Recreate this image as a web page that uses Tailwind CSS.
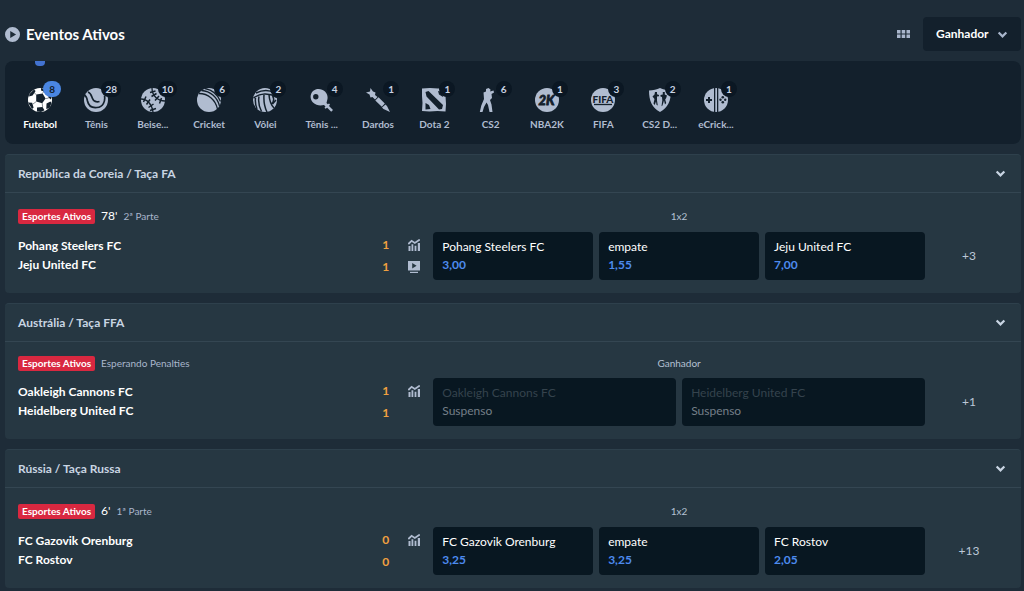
<!DOCTYPE html>
<html lang="pt">
<head>
    <meta charset="UTF-8">
    <meta name="viewport" content="width=device-width, initial-scale=1.0">
    <title>Eventos Ativos</title>
    <script src="https://cdn.jsdelivr.net/npm/@tailwindcss/browser@4"></script>
</head>
<body class="bg-[#1e2c38] font-['Lato','Open_Sans',sans-serif] text-white text-[12px] min-h-screen">

    <!-- shared icons -->
    <svg class="hidden">
        <symbol id="chevron" viewBox="0 0 10 10">
            <path d="M1.5 3.2 5 6.7l3.5-3.5" fill="none" stroke="currentColor" stroke-width="2"/>
        </symbol>
        <symbol id="stats" viewBox="0 0 12 12">
            <path d="M.3 5 3.6 1.800l3.200 2.200L11.800.6" fill="none" stroke="currentColor" stroke-width="1.800"/>
            <path d="M.5 7H2.500v5H.5zM3.500 5.200h1.800V12H3.500zM6.600 6.800h1.800V12H6.600zM9.800 4H12v8H9.800z" fill="currentColor"/>
        </symbol>
        <symbol id="tv" viewBox="0 0 12 12">
            <path d="M0 0h12v9.6H0zM4.2 2v5.4L8.6 4.7z" fill="currentColor" fill-rule="evenodd"/>
            <path d="M2 10.8h8V12H2z" fill="currentColor"/>
        </symbol>
    </svg>

    <div class="pl-[5px] pr-[3px]">
        <header class="flex items-center justify-between pt-[17px] pb-[10px]">
            <div class="flex items-center gap-1.5">
                <svg class="size-[15px]" viewBox="0 0 16 16"><path fill="#b0bcd0" fill-rule="evenodd" d="M8 0a8 8 0 1 0 0 16A8 8 0 0 0 8 0zM5.6 4.2v7.6L11.8 8z"/></svg>
                <h1 class="font-bold text-[15px]">Eventos Ativos</h1>
            </div>
            <div class="flex items-center gap-[13px]">
                <button aria-label="Grade">
                    <svg class="w-[13px] h-[8px]" viewBox="0 0 13 8" fill="#a9b6cc"><path d="M0 0h3.5v3.5H0zM4.7 0h3.5v3.5H4.7zM9.5 0H13v3.5H9.5zM0 4.5h3.5V8H0zM4.7 4.5h3.5V8H4.7zM9.5 4.5H13V8H9.5z"/></svg>
                </button>
                <div class="relative">
                    <select aria-label="Mercado" class="appearance-none bg-[#13202c] rounded h-[34px] w-[98px] pl-[13px] pr-6 font-bold text-[12px]">
                        <option>Ganhador</option>
                        <option>Total</option>
                    </select>
                    <svg class="absolute right-[13px] top-3 size-[11px] text-[#a9b6cc] pointer-events-none"><use href="#chevron"/></svg>
                </div>
            </div>
        </header>

        <!-- sports -->
        <nav class="bg-[#13202c] rounded-lg h-[83px] pl-[7px] mb-[10px]">
            <div class="flex max-w-[732px] h-full font-bold text-[10px] leading-3 text-[#b0bcd0] text-center">
                <a href="#" class="flex-1 relative flex flex-col items-center pt-[27px] gap-1.5 text-white">
                    <span class="absolute top-0 w-2.5 h-[5px] rounded-b bg-[#4272d0]"></span>
                    <span class="relative">
                        <svg class="size-6" viewBox="0 0 24 24"><circle cx="12" cy="12" r="12" fill="#fff"/><path fill="#13202c" d="m8.2 6.6 6.4-1.2 3 5.2-3.4 4.6-6-1.6zM1.5 6 6 1.5 7.6 3l-3 4.4-3.6 1zM0 14.500l4.200.2 1.400 5-1.600 1.300zM9 19.500l5.500-.5 2 3.200-3.500 1.800-4-.6zM18.500 15.500l4-2 1 1.500-2 5-3.200 1zM13 0l5.500 2-1 2-4.500-1.500zM20.500 5l3 4-.5 2.500-2.600-2z"/><path stroke="#13202c" stroke-width=".5" fill="none" d="M8.200 6.600 6 4.500M14.600 5.400 16 3M17.600 10.600l3-.5M14.200 15.200l.5 4M8.200 13.600 5 16"/></svg>
                        <span class="absolute left-[15px] -top-[7px] h-4 min-w-[18px] rounded-full bg-[#4a86e2] text-[#13202c] leading-4 px-1">8</span>
                    </span>
                    Futebol
                </a>
                <a href="#" class="flex-1 flex flex-col items-center pt-[27px] gap-1.5">
                    <span class="relative">
                        <svg class="size-6" viewBox="0 0 24 24"><circle cx="12" cy="12" r="12" fill="#b0bcd0"/><path stroke="#13202c" stroke-width="1.700" fill="none" d="M-.5 6.500C2.500 7.500 3 10 3.500 13c1 5 5 7 9.500 6.500 6-.5 8.500-6 7.500-12M4 4c3 1 3.500 4 4.500 6.500 1 3 4 4 7 3"/></svg>
                        <span class="absolute left-[17px] -top-[7px] h-4 min-w-4 rounded-full bg-[#0b1723] text-[#c9d3e2] leading-4 px-1">28</span>
                    </span>
                    Tênis
                </a>
                <a href="#" class="flex-1 flex flex-col items-center pt-[27px] gap-1.5">
                    <span class="relative">
                        <svg class="size-6" viewBox="0 0 24 24"><circle cx="12" cy="12" r="12" fill="#b0bcd0"/><path stroke="#13202c" stroke-width="1.300" fill="none" d="M0 11c6 0 11 5 12 13M11 0c0 8 6 13 13 13"/><path stroke="#13202c" stroke-width="1.500" fill="none" d="m2.500 14 2.500-5.500M5.500 16.500l3.500-5M7.500 19.500l5-3.500M9 22.500l6-2M9 4.500 14.500 3M10.500 8.500l5-3M14 12.500l4-4.500M18.500 15.500 20.500 10"/></svg>
                        <span class="absolute left-[17px] -top-[7px] h-4 min-w-4 rounded-full bg-[#0b1723] text-[#c9d3e2] leading-4 px-1">10</span>
                    </span>
                    Beise...
                </a>
                <a href="#" class="flex-1 flex flex-col items-center pt-[27px] gap-1.5">
                    <span class="relative">
                        <svg class="size-6" viewBox="0 0 24 24"><circle cx="12" cy="12" r="12" fill="#b0bcd0"/><path stroke="#13202c" stroke-width="1.300" fill="none" d="M2 5.500C11 5.500 18.500 11.500 20.500 21M4.500 2.500C13.500 3 20.500 9.500 22.500 18M8 .5C16 2 21 7 23.500 13.500"/></svg>
                        <span class="absolute left-[17px] -top-[7px] h-4 min-w-4 rounded-full bg-[#0b1723] text-[#c9d3e2] leading-4 px-1">6</span>
                    </span>
                    Cricket
                </a>
                <a href="#" class="flex-1 flex flex-col items-center pt-[27px] gap-1.5">
                    <span class="relative">
                        <svg class="size-6" viewBox="0 0 24 24"><circle cx="12" cy="12" r="12" fill="#b0bcd0"/><path stroke="#13202c" stroke-width="1.500" fill="none" d="M.5 10C7 5 16 4.500 24 9.500M3 5C9 2 16 1.500 22 5M11 7c-.5 7 .5 12 3 17M6 8.500c-1 5 0 10 2.500 15M2.500 10c-.5 4 0 7 1.500 11M16 7c.5 6 2 10 5 13M19.500 8c2 3 1 6-1 8M23 12l-3.500 4"/></svg>
                        <span class="absolute left-[17px] -top-[7px] h-4 min-w-4 rounded-full bg-[#0b1723] text-[#c9d3e2] leading-4 px-1">2</span>
                    </span>
                    Vôlei
                </a>
                <a href="#" class="flex-1 flex flex-col items-center pt-[27px] gap-1.5">
                    <span class="relative">
                        <svg class="size-6" viewBox="0 0 24 24"><path fill="#b0bcd0" fill-rule="evenodd" d="M3 3C6.500-.2 12 .5 15 3.500c2.500 2.500 3 5.500 2.300 8.300L16.500 15l1.300 1.300L19 15.500l1 1-1 1.500 4 4-1.800 1.800-4-4-1.700 1-1-1 1-1.300-1.500-1.500-3.500.5C8 17.500 5 16.500 3 14.500-.2 11.500-.2 6 3 3zM5.800 6a2.700 2.700 0 1 0 0 5.400 2.700 2.700 0 0 0 0-5.400z"/></svg>
                        <span class="absolute left-[17px] -top-[7px] h-4 min-w-4 rounded-full bg-[#0b1723] text-[#c9d3e2] leading-4 px-1">4</span>
                    </span>
                    Tênis ...
                </a>
                <a href="#" class="flex-1 flex flex-col items-center pt-[27px] gap-1.5">
                    <span class="relative">
                        <svg class="size-6" viewBox="0 0 24 24" fill="#b0bcd0"><path d="M4.500 0 7 3.500 9.500 4.500 9 7l2.500 2L9 11.500 6.500 9 4.500 9.500 3.500 6.500 0 4.500l4-1zM12.500 9.300l6.300 6.200-3 3.200-6.500-6.200zM19.500 16.500 21 18l3 6-6.500-3-1.500-1.500z"/></svg>
                        <span class="absolute left-[17px] -top-[7px] h-4 min-w-4 rounded-full bg-[#0b1723] text-[#c9d3e2] leading-4 px-1">1</span>
                    </span>
                    Dardos
                </a>
                <a href="#" class="flex-1 flex flex-col items-center pt-[27px] gap-1.5">
                    <span class="relative">
                        <svg class="size-6" viewBox="0 0 24 24"><path fill="#b0bcd0" d="M0 .5 8 0l8 .5 8-.5-.5 8 .5 8-.5 7.500-8-.5-8 .5-7.500-.5.5-8L0 8z"/><path fill="#13202c" d="m3.500 4 3-1L21 17l-1 4-3 .5L4.500 8.500zM3.500 15l3.500 2 1.500 4-5 .5zM16 3l4.500 1L21 9l-4-2.500z"/></svg>
                        <span class="absolute left-[17px] -top-[7px] h-4 min-w-4 rounded-full bg-[#0b1723] text-[#c9d3e2] leading-4 px-1">1</span>
                    </span>
                    Dota 2
                </a>
                <a href="#" class="flex-1 flex flex-col items-center pt-[27px] gap-1.5">
                    <span class="relative">
                        <svg class="size-6" viewBox="0 0 24 24" fill="#b0bcd0"><path d="M7 1 9.500 0l2 1.500-.3 2 3.300-1 .5 2-2.500 1.500.5 4-2 2 1.500 4.500 1 7.500h-3L9 17l-1.500-2.500L5 19l-1.500 5H.8l1.500-6.500L5 11l-.5-6.500L7 3.500z"/></svg>
                        <span class="absolute left-[17px] -top-[7px] h-4 min-w-4 rounded-full bg-[#0b1723] text-[#c9d3e2] leading-4 px-1">6</span>
                    </span>
                    CS2
                </a>
                <a href="#" class="flex-1 flex flex-col items-center pt-[27px] gap-1.5">
                    <span class="relative">
                        <svg class="size-6" viewBox="0 0 24 24"><circle cx="12" cy="12" r="12" fill="#b0bcd0"/><text x="11.500" y="16.500" text-anchor="middle" font-size="13" font-weight="900" font-style="italic" fill="#13202c" stroke="#13202c" stroke-width=".8">2K</text></svg>
                        <span class="absolute left-[17px] -top-[7px] h-4 min-w-4 rounded-full bg-[#0b1723] text-[#c9d3e2] leading-4 px-1">1</span>
                    </span>
                    NBA2K
                </a>
                <a href="#" class="flex-1 flex flex-col items-center pt-[27px] gap-1.5">
                    <span class="relative">
                        <svg class="size-6" viewBox="0 0 24 24"><circle cx="12" cy="12" r="12" fill="#b0bcd0"/><path stroke="#13202c" stroke-width="1.300" d="M3 16.500h18"/><text x="12" y="14.500" text-anchor="middle" font-size="10" font-weight="900" fill="#13202c">FIFA</text></svg>
                        <span class="absolute left-[17px] -top-[7px] h-4 min-w-4 rounded-full bg-[#0b1723] text-[#c9d3e2] leading-4 px-1">3</span>
                    </span>
                    FIFA
                </a>
                <a href="#" class="flex-1 flex flex-col items-center pt-[27px] gap-1.5">
                    <span class="relative">
                        <svg class="size-6" viewBox="0 0 24 24"><path fill="#b0bcd0" d="M1 2.500C5 2.500 9 1.500 12 0c3 1.500 7 2.500 11 2.500 0 10-3 17.500-11 21.500C4 20 1 12.500 1 2.500z"/><path fill="#13202c" d="M7 4h2v2.200l2 .8v1.200l-2 .3v4l.8 5-1.300-.8L8 13.500 6.700 17l-1.200-1.500L6.500 11l-2-2.500L6.500 6.500zM14.800 4h2v2.500l2.200 1-.8 2.500-1 1.500 1 3.500-1.200 1.500-1-4-1.500 5-1 .8.8-6L14 9l-1.500-.5V7l2.300-.5z"/></svg>
                        <span class="absolute left-[17px] -top-[7px] h-4 min-w-4 rounded-full bg-[#0b1723] text-[#c9d3e2] leading-4 px-1">2</span>
                    </span>
                    CS2 D...
                </a>
                <a href="#" class="flex-1 flex flex-col items-center pt-[27px] gap-1.5">
                    <span class="relative">
                        <svg class="size-6" viewBox="0 0 24 24"><circle cx="12" cy="12" r="12" fill="#b0bcd0"/><path fill="#13202c" d="M10 0h1.300v24H10zM13 0h1.300v24H13zM4 9h2v2h2v2H6v2H4v-2H2v-2h2z"/><g fill="#13202c"><circle cx="18.800" cy="9.200" r="1.300"/><circle cx="18.800" cy="14.200" r="1.300"/><circle cx="16.500" cy="11.700" r="1.200"/><circle cx="21.200" cy="11.700" r="1.200"/></g></svg>
                        <span class="absolute left-[17px] -top-[7px] h-4 min-w-4 rounded-full bg-[#0b1723] text-[#c9d3e2] leading-4 px-1">1</span>
                    </span>
                    eCrick...
                </a>
            </div>
        </nav>

        <main class="flex flex-col gap-[10px]">
            <section class="bg-[#263742] rounded border-t border-[#2e404c]">
                <button class="flex w-full items-center justify-between h-[38px] pl-[13px] pr-[15px] border-b border-[#344652] text-[#c9d5e3]">
                    <span class="font-bold">República da Coreia / Taça FA</span>
                    <svg class="size-[11px]"><use href="#chevron"/></svg>
                </button>
                <div class="grid grid-cols-[38fr_45fr_88px] pl-[13px] pr-2 py-[13px] gap-y-1.5">
                    <div class="flex items-center gap-1.5 h-5 text-[10px] text-[#a9b6cc]">
                        <span class="bg-[#d92840] text-white font-bold rounded-xs px-1 leading-[15px]">Esportes Ativos</span>
                        <span class="text-white text-[12px]">78'</span>
                        <span>2ª Parte</span>
                    </div>
                    <div class="text-center text-[10px] leading-5 text-[#b4c0d2]">1x2</div>
                    <div></div>
                    <div class="flex pr-[13px] font-bold">
                        <div class="flex-1 pt-1 leading-[19px]">
                            <p>Pohang Steelers FC</p>
                            <p>Jeju United FC</p>
                        </div>
                        <div class="w-8 pt-0.5 leading-[22px] text-[#f0a040] pl-1.5">
                            <p>1</p>
                            <p>1</p>
                        </div>
                        <div class="flex flex-col gap-[10px] pt-[7px] text-[#b0bcd0]">
                            <svg class="size-3"><use href="#stats"/></svg>
                            <svg class="size-3"><use href="#tv"/></svg>
                        </div>
                    </div>
                    <div class="flex gap-1.5">
                        <button class="flex-1 bg-[#081721] rounded h-12 px-[9px] text-left leading-[18px]">
                            <span class="block">Pohang Steelers FC</span>
                            <span class="block font-bold text-[#4d8bee]">3,00</span>
                        </button>
                        <button class="flex-1 bg-[#081721] rounded h-12 px-[9px] text-left leading-[18px]">
                            <span class="block">empate</span>
                            <span class="block font-bold text-[#4d8bee]">1,55</span>
                        </button>
                        <button class="flex-1 bg-[#081721] rounded h-12 px-[9px] text-left leading-[18px]">
                            <span class="block">Jeju United FC</span>
                            <span class="block font-bold text-[#4d8bee]">7,00</span>
                        </button>
                    </div>
                    <a href="#" class="flex items-center justify-center text-[#bcc8d8]">+3</a>
                </div>
            </section>

            <section class="bg-[#263742] rounded border-t border-[#2e404c]">
                <button class="flex w-full items-center justify-between h-[38px] pl-[13px] pr-[15px] border-b border-[#344652] text-[#c9d5e3]">
                    <span class="font-bold">Austrália / Taça FFA</span>
                    <svg class="size-[11px]"><use href="#chevron"/></svg>
                </button>
                <div class="grid grid-cols-[38fr_45fr_88px] pl-[13px] pr-2 py-[13px] gap-y-1.5">
                    <div class="flex items-center gap-1.5 h-[17px] text-[10px] text-[#a9b6cc]">
                        <span class="bg-[#d92840] text-white font-bold rounded-xs px-1 leading-[15px]">Esportes Ativos</span>
                        <span>Esperando Penalties</span>
                    </div>
                    <div class="text-center text-[10px] leading-[17px] text-[#b4c0d2]">Ganhador</div>
                    <div></div>
                    <div class="flex pr-[13px] font-bold">
                        <div class="flex-1 pt-1 leading-[19px]">
                            <p>Oakleigh Cannons FC</p>
                            <p>Heidelberg United FC</p>
                        </div>
                        <div class="w-8 pt-0.5 leading-[22px] text-[#f0a040] pl-1.5">
                            <p>1</p>
                            <p>1</p>
                        </div>
                        <div class="flex flex-col gap-[10px] pt-[7px] text-[#b0bcd0]">
                            <svg class="size-3"><use href="#stats"/></svg>
                        </div>
                    </div>
                    <div class="flex gap-1.5">
                        <button disabled class="flex-1 bg-[#081721] rounded h-12 px-[9px] text-left leading-[18px]">
                            <span class="block text-[#35434d]">Oakleigh Cannons FC</span>
                            <span class="block text-[#747f88]">Suspenso</span>
                        </button>
                        <button disabled class="flex-1 bg-[#081721] rounded h-12 px-[9px] text-left leading-[18px]">
                            <span class="block text-[#35434d]">Heidelberg United FC</span>
                            <span class="block text-[#747f88]">Suspenso</span>
                        </button>
                    </div>
                    <a href="#" class="flex items-center justify-center text-[#bcc8d8]">+1</a>
                </div>
            </section>

            <section class="bg-[#263742] rounded border-t border-[#2e404c]">
                <button class="flex w-full items-center justify-between h-[38px] pl-[13px] pr-[15px] border-b border-[#344652] text-[#c9d5e3]">
                    <span class="font-bold">Rússia / Taça Russa</span>
                    <svg class="size-[11px]"><use href="#chevron"/></svg>
                </button>
                <div class="grid grid-cols-[38fr_45fr_88px] pl-[13px] pr-2 py-[13px] gap-y-1.5">
                    <div class="flex items-center gap-1.5 h-5 text-[10px] text-[#a9b6cc]">
                        <span class="bg-[#d92840] text-white font-bold rounded-xs px-1 leading-[15px]">Esportes Ativos</span>
                        <span class="text-white text-[12px]">6'</span>
                        <span>1ª Parte</span>
                    </div>
                    <div class="text-center text-[10px] leading-5 text-[#b4c0d2]">1x2</div>
                    <div></div>
                    <div class="flex pr-[13px] font-bold">
                        <div class="flex-1 pt-1 leading-[19px]">
                            <p>FC Gazovik Orenburg</p>
                            <p>FC Rostov</p>
                        </div>
                        <div class="w-8 pt-0.5 leading-[22px] text-[#f0a040] pl-1.5">
                            <p>0</p>
                            <p>0</p>
                        </div>
                        <div class="flex flex-col gap-[10px] pt-[7px] text-[#b0bcd0]">
                            <svg class="size-3"><use href="#stats"/></svg>
                        </div>
                    </div>
                    <div class="flex gap-1.5">
                        <button class="flex-1 bg-[#081721] rounded h-12 px-[9px] text-left leading-[18px]">
                            <span class="block">FC Gazovik Orenburg</span>
                            <span class="block font-bold text-[#4d8bee]">3,25</span>
                        </button>
                        <button class="flex-1 bg-[#081721] rounded h-12 px-[9px] text-left leading-[18px]">
                            <span class="block">empate</span>
                            <span class="block font-bold text-[#4d8bee]">3,25</span>
                        </button>
                        <button class="flex-1 bg-[#081721] rounded h-12 px-[9px] text-left leading-[18px]">
                            <span class="block">FC Rostov</span>
                            <span class="block font-bold text-[#4d8bee]">2,05</span>
                        </button>
                    </div>
                    <a href="#" class="flex items-center justify-center text-[#bcc8d8]">+13</a>
                </div>
            </section>
        </main>
    </div>
</body>
</html>
